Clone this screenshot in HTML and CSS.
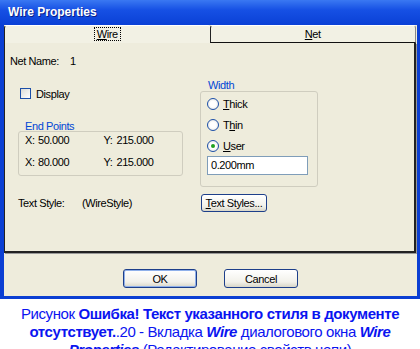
FILE: index.html
```html
<!DOCTYPE html>
<html lang="ru">
<head>
  <meta charset="UTF-8" />
  <title>Wire Properties</title>
  <link rel="stylesheet" href="styles.css">
</head>
<body>
  <div class="window">
    <div class="titlebar">Wire Properties</div>
    <div class="window-body">
      <div class="tabs">
        <div class="tab active"><span class="focus"><u>W</u>ire</span></div>
        <div class="tab"><u>N</u>et</div>
      </div>

      <div class="panel">
        <div class="net-name">
          <span class="net-label">Net Name:</span>
          <span>1</span>
        </div>

        <div class="main">
          <div class="left-col">
            <label class="check"><span class="check-box"></span><span>Display</span></label>

            <div class="group endpoints">
              <div class="group-title">End Points</div>
              <div class="group-box coords">
                <div class="coord-row">
                  <span class="axis">X:</span><span class="val">50.000</span>
                  <span class="axis">Y:</span><span class="val">215.000</span>
                </div>
                <div class="coord-row">
                  <span class="axis">X:</span><span class="val">80.000</span>
                  <span class="axis">Y:</span><span class="val">215.000</span>
                </div>
              </div>
            </div>
          </div>

          <div class="group width-group">
            <div class="group-title">Width</div>
            <div class="group-box radios">
              <label class="radio"><span class="radio-dot"></span><span><u>T</u>hick</span></label>
              <label class="radio"><span class="radio-dot"></span><span>T<u>h</u>in</span></label>
              <label class="radio"><span class="radio-dot checked"></span><span><u>U</u>ser</span></label>
              <div class="text-input">0.200mm</div>
            </div>
          </div>
        </div>

        <div class="style-row">
          <span class="style-label">Text Style:</span>
          <span class="style-value">(WireStyle)</span>
          <button class="btn small"><u>T</u>ext Styles...</button>
        </div>
      </div>

      <div class="buttons">
        <button class="btn default">OK</button>
        <button class="btn">Cancel</button>
      </div>
    </div>
  </div>

  <p class="caption">
    Рисунок <b>Ошибка! Текст указанного стиля в документе отсутствует.</b>.20 - Вкладка <b><i>Wire</i></b> диалогового окна <b><i>Wire Properties</i></b> (Редактирование свойств цепи)
  </p>
</body>
</html>
```

FILE: styles.css
```css
* { margin: 0; padding: 0; box-sizing: border-box; }

body {
  width: 420px;
  height: 349px;
  overflow: hidden;
  background: #ffffff;
  font-family: 'Liberation Sans', sans-serif;
  font-size: 11px;
  letter-spacing: -0.4px;
  color: #000;
}

.window { width: 420px; }

.titlebar {
  height: 25px;
  padding: 5px 0 0 8px;
  background: linear-gradient(180deg, #3a78f2 0%, #1650e4 40%, #0a40d6 100%);
  color: #fff;
  font-weight: bold;
  font-size: 12px;
  letter-spacing: 0;
  text-shadow: 1px 1px 0 #0a1f8a;
}

.window-body {
  height: 274px;
  background: #eeecdc;
  border-left: 4px solid #0b3fd3;
  border-right: 3px solid #0b3fd3;
  border-bottom: 3px solid #0b3fd3;
}

.tabs { display: flex; height: 18px; width: 412px; }

.tab {
  flex: 1;
  text-align: center;
  line-height: 16px;
  border-top: 1px solid #fff;
  border-left: 1px solid #222;
  border-right: 1px solid #888;
  border-radius: 3px 3px 0 0;
  background: #f2f1e4;
}

.tab:not(.active) { border-bottom: 1px solid #111; }
.tab.active { border-right: none; }

.focus { border: 1px dotted #000; padding: 0 2px; }

.panel {
  width: 412px;
  height: 210px;
  padding: 12px 0 0 5px;
  border-left: 1px solid #222;
  border-right: 2px solid #222;
  border-bottom: 2px solid #222;
  box-shadow: 1px 1px 0 #999;
}

.net-name { display: flex; line-height: 13px; }
.net-label { width: 60px; }

.main { display: flex; margin-top: 12px; }

.left-col { width: 190px; padding-left: 8px; }

.check { display: flex; align-items: center; gap: 5px; margin: 8px 0 0 2px; height: 11px; }
.check-box {
  width: 11px; height: 11px;
  border: 1px solid #1c4fa8;
  background: linear-gradient(135deg, #dcdcd6, #fff);
}

.group-title { color: #0046d5; height: 9px; line-height: 9px; padding-left: 7px; }
.group-box { border: 1px solid #cfcdbf; border-radius: 3px; }

.endpoints { margin-top: 23px; width: 165px; }
.coords { height: 45px; padding: 2px 0 0 6px; display: flex; flex-direction: column; gap: 9px; }
.coord-row { display: flex; line-height: 13px; }
.axis { width: 13px; }
.val { width: 66px; }

.width-group { width: 118px; }
.width-group .group-title { padding-left: 8px; height: 11px; line-height: 11px; }
.radios { height: 96px; padding: 6px 0 0 6px; display: flex; flex-direction: column; gap: 9px; }

.radio { display: flex; align-items: center; gap: 4px; height: 12px; }
.radio-dot {
  width: 12px; height: 12px;
  border: 1px solid #1c4fa8;
  border-radius: 50%;
  background: radial-gradient(circle, #fff 40%, #dcdcd6 100%);
  display: flex; align-items: center; justify-content: center;
}
.radio-dot.checked::after {
  content: "";
  width: 4px; height: 4px;
  border-radius: 50%;
  background: #21a121;
}

.text-input {
  width: 101px; height: 19px;
  margin-top: -5px;
  border: 1px solid #7f9db9;
  background: #fff;
  padding: 2px 0 0 3px;
  line-height: 13px;
}

.style-row { display: flex; align-items: center; height: 18px; margin-top: 7px; padding-left: 8px; }
.style-label { width: 64px; }
.style-value { width: 119px; }

.btn {
  font: inherit;
  letter-spacing: inherit;
  white-space: nowrap;
  color: #000;
  height: 18px;
  border: 1px solid #1d3f8a;
  border-radius: 3px;
  background: linear-gradient(180deg, #ffffff 0%, #f2f1ea 70%, #d8d6c8 100%);
}
.btn.small { width: 66px; }

.buttons { display: flex; justify-content: center; gap: 27px; margin-top: 16px; }
.buttons .btn { width: 74px; height: 19px; }
.btn.default { box-shadow: inset 0 0 0 1px #8fb0ea; }

.caption {
  margin-top: 6px;
  padding: 0 10px;
  text-align: center;
  font-size: 15px;
  letter-spacing: -0.4px;
  line-height: 18px;
  color: #0a14f0;
}
```
